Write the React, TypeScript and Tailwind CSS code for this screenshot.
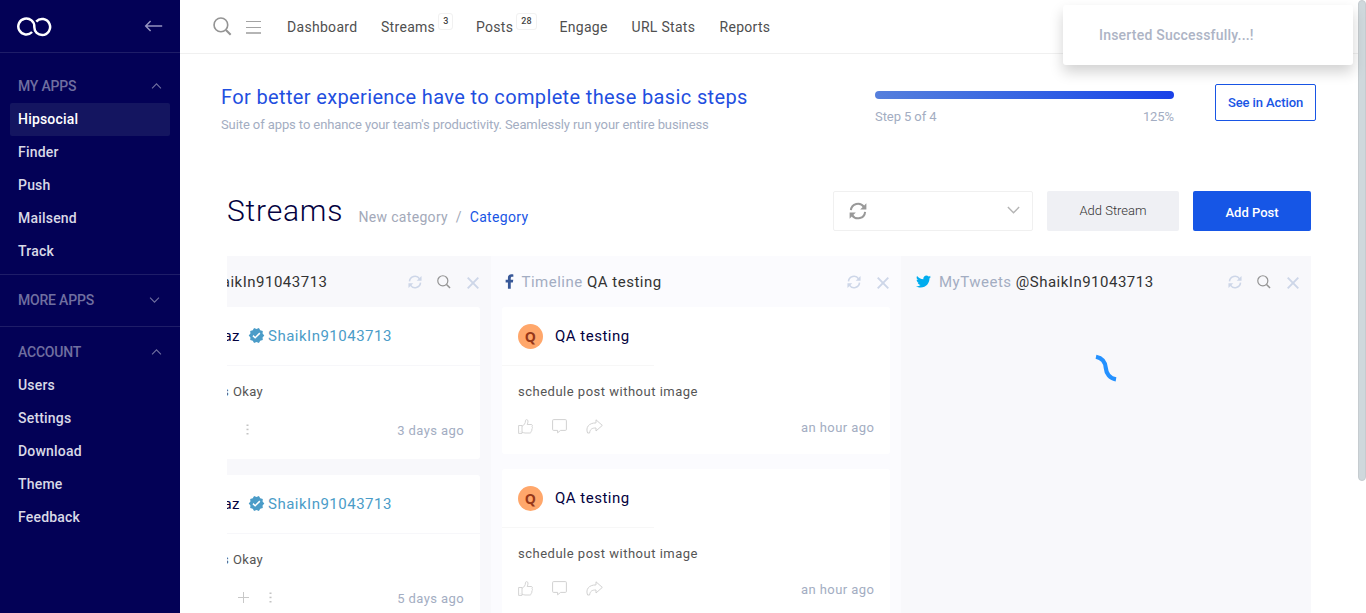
import React from "react";
import { FaTwitter, FaFacebookF } from "react-icons/fa";
import { MdVerified } from "react-icons/md";

type P = { className?: string };

const Search = ({ className = "" }: P) => (
  <svg viewBox="0 0 20 20" fill="none" stroke="currentColor" className={className}>
    <circle cx="8.3" cy="8.3" r="7.2" strokeWidth="1.7" />
    <path d="M13.6 13.6 L18.6 18.6" strokeWidth="2.1" />
  </svg>
);

const Sync = ({ className = "" }: P) => (
  <svg viewBox="0 0 18 18" fill="none" stroke="currentColor" strokeWidth="2" className={className}>
    <path d="M1.9 8.2 A7.1 7.1 0 0 1 14.9 4.9" />
    <path d="M16.1 9.8 A7.1 7.1 0 0 1 3.1 13.1" />
    <path d="M17.4 1.2 V7.4 H11.2 Z" fill="currentColor" stroke="none" />
    <path d="M0.6 16.8 V10.6 H6.8 Z" fill="currentColor" stroke="none" />
  </svg>
);

const Cross = ({ className = "" }: P) => (
  <svg viewBox="0 0 12 12" fill="none" stroke="currentColor" strokeWidth="1.9" className={className}>
    <path d="M0.7 0.7 L11.3 11.3 M11.3 0.7 L0.7 11.3" />
  </svg>
);

const Chevron = ({ className = "" }: P) => (
  <svg viewBox="0 0 12 7" fill="none" stroke="currentColor" strokeWidth="1.3" className={className}>
    <path d="M0.8 0.8 L6 6 L11.2 0.8" />
  </svg>
);

const Like = ({ className = "" }: P) => (
  <svg viewBox="0 0 15 15" fill="none" stroke="currentColor" strokeWidth="0.9" strokeLinejoin="round" className={className}>
    <path d="M0.6 6.5 H4 V14.4 H0.6 Z" />
    <path d="M4 7.3 C6.3 6 7.4 4.3 7.5 1.6 C7.5 0.3 9.8 0.2 10 2 C10.1 3.5 9.6 4.6 9.2 5.5 H13.2 C14.6 5.6 14.7 7 14 7.7 C14.8 8.4 14.5 9.6 13.7 10 C14.2 10.9 13.9 11.8 13.1 12.2 C13.4 13.2 12.8 14 11.8 14 H7 C5.8 14 5 13.4 4 13.2" />
    <path d="M2.3 12.6 V12.9" />
  </svg>
);

const Comment = ({ className = "" }: P) => (
  <svg viewBox="0 0 15 15" fill="none" stroke="currentColor" strokeWidth="0.95" className={className}>
    <path d="M0.6 1.5 Q0.6 0.6 1.5 0.6 H13.5 Q14.4 0.6 14.4 1.5 V10.4 Q14.4 11.4 13.5 11.4 H8.6 L5.6 13.8 V11.4 H1.5 Q0.6 11.4 0.6 10.4 Z" />
  </svg>
);

const Share = ({ className = "" }: P) => (
  <svg viewBox="0 0 17 15" fill="none" stroke="currentColor" strokeWidth="0.95" strokeLinejoin="round" className={className}>
    <path d="M10 0.8 L16.3 6.4 L10 12 V9 C6 8.9 4 10.2 3.6 14 H1.6 C-0.6 8.5 2.7 3.9 10 3.9 Z" />
  </svg>
);

const MenuGroup = ({ title, open, items, active }: { title: string; open: boolean; items?: string[]; active?: string }) => (
  <div>
    <div className="flex h-[34px] items-center justify-between pr-[18px] pl-[18px] text-sm font-medium tracking-[-0.2px] text-[#706fa0]">
      <span>{title}</span>
      <Chevron className={open ? "h-[6px] w-[11px] rotate-180" : "mr-[2px] h-[6px] w-[11px]"} />
    </div>
    {items?.map((item) => (
      <div
        key={item}
        className={
          item === active
            ? "mx-[10px] flex h-[33px] items-center rounded-[2px] bg-[#141560] px-2 pb-[2px] text-sm font-medium tracking-[0.2px] text-white"
            : "mx-[10px] flex h-[33px] items-center px-2 pb-[2px] text-sm font-medium tracking-[0.2px] text-[#d9d9e6]"
        }
      >
        {item}
      </div>
    ))}
  </div>
);

const Sidebar = () => (
  <aside className="flex w-[180px] shrink-0 flex-col bg-[#030156]">
    <div className="flex h-[53px] items-center justify-between border-b border-[#1e1d68] pr-[17px] pl-[17px]">
      <svg width="35" height="20" viewBox="0 0 35 20" fill="none" stroke="#fff" strokeWidth="2.5" className="mt-[2px]">
        <path d="M15.1 15 A8 8 0 1 1 17.3 10 C17.3 15 21 18 25.2 18 A8 8 0 1 0 19.2 4.6" />
      </svg>
      <svg width="19" height="12" viewBox="0 0 19 12" fill="none" stroke="#9593c0" strokeWidth="1.5">
        <path d="M18.2 6 H1.7 M6.6 1 L1.7 6 L6.6 11" />
      </svg>
    </div>
    <div className="h-[222px] border-b border-[#1e1d68] pt-[16px]">
      <MenuGroup title="MY APPS" open active="Hipsocial" items={["Hipsocial", "Finder", "Push", "Mailsend", "Track"]} />
    </div>
    <div className="h-[52px] border-b border-[#1e1d68] pt-[8px]">
      <MenuGroup title="MORE APPS" open={false} />
    </div>
    <div className="pt-[8px]">
      <MenuGroup title="ACCOUNT" open items={["Users", "Settings", "Download", "Theme", "Feedback"]} />
    </div>
  </aside>
);

const Count = ({ children }: { children: React.ReactNode }) => (
  <span className="mb-[11px] ml-[3px] flex h-[17px] items-center rounded-[3px] border border-[#f1f1f1] px-[4px] text-[9px] font-medium tracking-[0.2px] text-[#444]">
    {children}
  </span>
);

const TopBar = () => (
  <header className="flex h-[54px] shrink-0 items-center border-b border-[#f0f0f0] pl-[32.5px] text-sm tracking-[0.3px] whitespace-nowrap text-[#4f4f4f]">
    <Search className="h-[19px] w-[19px] text-[#949494]" />
    <svg width="15" height="13" viewBox="0 0 15 13" stroke="#a3a3a3" className="mt-[2px] ml-[14.5px]">
      <path d="M0 0.5 H15 M0 6.5 H15" strokeWidth="1" />
      <path d="M0 12 H15" strokeWidth="1.6" />
    </svg>
    <span className="ml-[26px] w-[94px]">Dashboard</span>
    <span className="flex w-[95px] items-center">Streams<Count>3</Count></span>
    <span className="flex w-[83.5px] items-center">Posts<Count>28</Count></span>
    <span className="w-[72px]">Engage</span>
    <span className="w-[88px]">URL Stats</span>
    <span>Reports</span>
  </header>
);

const Steps = () => (
  <section className="flex h-[137px] pt-[30px] pl-[41px]">
    <div className="w-[654px] whitespace-nowrap">
      <h2 className="text-xl leading-[26px] tracking-[0.36px] text-[#1f4fe0]">For better experience have to complete these basic steps</h2>
      <p className="mt-[6px] text-[13px] leading-[17px] tracking-[-0.095px] text-[#a3adc2]">
        Suite of apps to enhance your team's productivity. Seamlessly run your entire business
      </p>
    </div>
    <div className="w-[299px] pt-[7px]">
      <div className="h-[8px] rounded-full bg-linear-to-r from-[#567fdc] to-[#1a41e8]" />
      <div className="mt-[9px] flex justify-between text-[13px] leading-[17px] tracking-[-0.08px] text-[#a3adc2]">
        <span>Step 5 of 4</span>
        <span>125%</span>
      </div>
    </div>
    <button className="ml-[41px] h-[37px] w-[101px] rounded-[2px] border border-[#1855e5] text-[13px] font-medium tracking-[-0.1px] text-[#1855e5]">See in Action</button>
  </section>
);

const Toolbar = () => (
  <section className="flex h-[65px] pl-[47px] whitespace-nowrap">
    <h1 className="w-[131.5px] text-[30px] leading-[39px] font-light tracking-[0.8px] text-[#030140]">Streams</h1>
    <div className="w-[474.5px] pt-[16px] text-sm leading-[20px] tracking-[0.32px] text-[#a3a9b9]">
      New category <span className="mx-[4px]">/</span> <span className="text-[#1855e5]">Category</span>
    </div>
    <div className="flex h-[40px] w-[200px] items-center justify-between rounded-[2px] border border-[#f0f0f0] pr-[12px] pl-[14.5px]">
      <Sync className="h-[18px] w-[18px] text-[#999]" />
      <Chevron className="mb-[2px] h-[8px] w-[13px] text-[#b4b4b4]" />
    </div>
    <button className="ml-[14px] h-[40px] w-[132px] rounded-[2px] bg-[#eff0f4] text-[13px] font-light text-[#333]">Add Stream</button>
    <button className="ml-[14px] h-[40px] w-[118px] rounded-[2px] bg-[#1656e6] pt-[3px] text-[13px] font-medium text-white">Add Post</button>
  </section>
);

const Actions = ({ search }: { search?: boolean }) => (
  <div className="flex items-center">
    <Sync className="h-[14px] w-[14px] text-[#cdd6e8]" />
    {search && <Search className="ml-[15px] h-[14px] w-[14px] text-[#949494]" />}
    <Cross className="mt-[3px] ml-[16px] h-[12px] w-[12px] text-[#cdd6e8]" />
  </div>
);

const HandleCard = ({ age, plus }: { age: string; plus?: boolean }) => (
  <article className="mb-[16px] h-[152px] w-[253px] overflow-hidden rounded-r-[3px] bg-white whitespace-nowrap">
    <div className="flex h-[59px] items-center border-b border-[#f7f7fa] text-[15px] tracking-[0.5px]">
      <div className="flex w-[13px] justify-end overflow-hidden text-[#030140]">az</div>
      <MdVerified className="mb-[1px] ml-[7.5px] h-[17px] w-[17px] text-[#4b9cc8]" />
      <span className="ml-[3.5px] text-[#4b9cc8]">ShaikIn91043713</span>
    </div>
    <div className="mt-[17px] flex h-[18px] items-center text-[13px] tracking-[0.3px] text-[#555]">
      <span className="mr-[4px] flex w-[2px] justify-end overflow-hidden">s</span>Okay
    </div>
    <div className="mt-[18px] flex h-[24px] items-center pr-[16px] text-[13px] text-[#a3adc2]">
      {plus && (
        <svg width="11" height="11" viewBox="0 0 11 11" stroke="#c8c8c8" className="mb-[4px] ml-[11px]">
          <path d="M5.5 0 V11 M0 5.5 H11" />
        </svg>
      )}
      <svg width="3" height="11" viewBox="0 0 3 11" fill="#c4c4c4" className={plus ? "mb-[4px] ml-[20px]" : "mb-[4px] ml-[19px]"}>
        <rect x="0.5" y="0.5" width="2" height="1.5" />
        <rect x="0.5" y="4.7" width="2" height="1.5" />
        <rect x="0.5" y="9" width="2" height="1.5" />
      </svg>
      <span className="ml-auto tracking-[0.4px]">{age}</span>
    </div>
  </article>
);

const PageCard = () => (
  <article className="mb-[15px] h-[147px] w-[388px] rounded-[3px] bg-white whitespace-nowrap">
    <div className="flex h-[59px] w-[152px] items-center border-b border-[#f7f7f7] pl-[16px]">
      <div className="flex h-[25px] w-[25px] shrink-0 items-center justify-center rounded-full bg-[#ffa76b] font-['Open_Sans'] text-[14px] font-bold text-[#973719]">Q</div>
      <span className="ml-[12px] text-[15px] tracking-[0.5px] text-[#030140]">QA testing</span>
    </div>
    <div className="mt-[17px] h-[18px] pl-[16px] text-[13px] leading-[18px] tracking-[0.5px] text-[#555]">schedule post without image</div>
    <div className="mt-[16px] flex h-[22px] items-center pr-[15.5px] pl-[16px] text-[#cfcfcf]">
      <Like className="mb-[3px] h-[15px] w-[15px]" />
      <Comment className="mb-[3px] ml-[19px] h-[15px] w-[15px]" />
      <Share className="mb-[3px] ml-[19px] h-[15px] w-[17px]" />
      <span className="ml-auto text-[13px] tracking-[0.45px] text-[#a3adc2]">an hour ago</span>
    </div>
  </article>
);

const Board = () => (
  <section className="ml-[47px] flex h-[357px] w-[1084px] overflow-hidden text-[15px] tracking-[0.5px] whitespace-nowrap text-[#333]">
    <div className="w-[264px] bg-[#f8f8fb]">
      <div className="flex h-[51px] items-center justify-between pr-[12.5px]">
        <div className="mt-[2px] flex w-[100.5px] justify-end overflow-hidden">@ShaikIn91043713</div>
        <Actions search />
      </div>
      <HandleCard age="3 days ago" />
      <HandleCard age="5 days ago" plus />
    </div>
    <div className="w-[410px] bg-[#fbfbfe] pl-[11px]">
      <div className="flex h-[51px] items-center justify-between pr-[12.5px] pl-[3px]">
        <div className="flex items-center">
          <FaFacebookF className="h-[15px] w-[9px] text-[#385898]" />
          <span className="mt-[2px] ml-[7.5px]"><span className="text-[#a3adc2]">Timeline</span> QA testing</span>
        </div>
        <Actions />
      </div>
      <PageCard />
      <PageCard />
    </div>
    <div className="w-[410px] bg-[#f8f8fb]">
      <div className="flex h-[51px] items-center justify-between pr-[12.5px] pl-[14.5px]">
        <div className="flex items-center">
          <FaTwitter className="h-[15px] w-[15px] text-[#00acee]" />
          <span className="mt-[2px] ml-[8.5px]"><span className="text-[#a3adc2]">MyTweets</span> @ShaikIn91043713</span>
        </div>
        <Actions search />
      </div>
      <div className="flex justify-center pt-[47px]">
        <svg width="22" height="28" viewBox="0 0 22 28" fill="none" stroke="#2491ff" strokeWidth="4.2">
          <path d="M1 2.8 C7 4 10.3 8.5 10.8 14 C11.2 19.5 14.8 24.3 21 25.4" />
        </svg>
      </div>
    </div>
  </section>
);

export default function App() {
  return (
    <div className="relative flex h-[613px] w-[1366px] overflow-hidden bg-white font-['Roboto',sans-serif]">
      <Sidebar />
      <main className="flex w-[1178px] shrink-0 flex-col">
        <TopBar />
        <Steps />
        <Toolbar />
        <Board />
      </main>
      <div className="w-[8px] shrink-0">
        <div className="h-[481px] rounded-full border border-[#c6ccd0] bg-[#cfd8dc]" />
      </div>
      <div className="absolute top-[5px] right-[13px] flex h-[60px] w-[290px] items-center rounded-[3px] bg-white pl-[36px] text-sm font-medium tracking-[0.22px] text-[#adb4c5] shadow-[0_7px_14px_rgba(0,0,0,0.18)]">
        Inserted Successfully...!
      </div>
    </div>
  );
}
